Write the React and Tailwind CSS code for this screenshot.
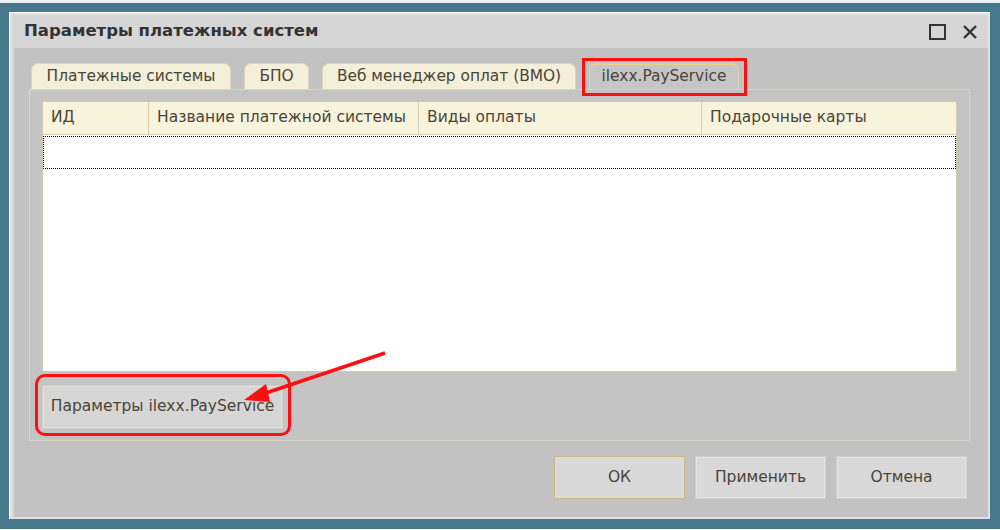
import React from "react";

const font = { fontFamily: '"DejaVu Sans", Verdana, sans-serif' };

const Tab = ({ label, w, active, children }) => (
  <div
    className={
      "relative h-[26px] flex items-center justify-center rounded-t-[7px] border border-b-0 text-[15.4px] text-[#4a4438] " +
      (active
        ? "bg-[#c6c6c6] border-[#d6d2c0] border-t-2 border-t-[#f0cf8c]"
        : "bg-[#f4efd8] border-[#ddd6bc]")
    }
    style={{ width: w }}
  >
    {label}
    {children}
  </div>
);

const HeadCell = ({ label, w, last }) => (
  <div
    className={
      "h-full flex items-center px-[8px] text-[15.5px] text-[#4a4438] " +
      (last ? "flex-1" : "border-r border-[#d6cca8]")
    }
    style={w ? { width: w } : undefined}
  >
    {label}
  </div>
);

const DlgButton = ({ label, primary }) => (
  <button
    className={
      "w-[131px] h-[43px] bg-[#d9d9d9] text-[15.5px] text-[#4a4438] border " +
      (primary
        ? "border-[#c9b98a] shadow-[inset_0_0_0_1px_#e6dcc0]"
        : "border-[#cfcfcf] shadow-[inset_0_0_0_1px_#e4e4e4]")
    }
  >
    {label}
  </button>
);

export default function App() {
  return (
    <div className="w-[1000px] h-[530px] bg-[#eef0f1] pt-[3px] pb-[1px]" style={font}>
      <div className="h-full bg-[#47788c] pl-[9px] pt-[9px] pr-[10px] pb-[10px]">
        <div className="h-full border-l border-t border-white bg-[#e2e2e2] p-[2px] flex flex-col">
          {/* Title bar */}
          <div className="h-[33px] bg-[#d6d6d6] flex items-center pl-[12px] pr-[10px]">
            <span className="text-[16.5px] font-bold text-[#333333]">
              Параметры платежных систем
            </span>
            <div className="ml-auto flex items-center gap-[16px]">
              <div className="w-[17px] h-[16px] border-2 border-[#333333]" />
              <svg width="16" height="16" viewBox="0 0 16 16">
                <path d="M2 2 L14 14 M14 2 L2 14" stroke="#333333" strokeWidth="2.4" />
              </svg>
            </div>
          </div>

          {/* Body */}
          <div className="flex-1 bg-[#c2c2c2] border-l-2 border-[#d8d8d8] pl-[15px] pr-[13px] pt-[15px] flex flex-col">
            {/* Tabs */}
            <div className="flex items-end gap-[13px] pl-[2px] relative z-10">
              <Tab label="Платежные системы" w={200} />
              <Tab label="БПО" w={65} />
              <Tab label="Веб менеджер оплат (ВМО)" w={254} />
              <Tab label="ilexx.PayService" w={150} active>
                <div className="absolute left-[-8px] right-[-9px] top-[-7px] bottom-[-7px] border-[3px] border-[#ff1010]" />
              </Tab>
            </div>

            {/* Panel */}
            <div className="h-[352px] w-[941px] border border-[#d9d6c6] bg-[#c4c4c4] px-[12px] pt-[11px] relative">
              <div className="h-[271px] bg-white border border-[#cfcab4] flex flex-col">
                <div className="h-[33px] bg-[#f8f4dc] border-b border-[#d8d0ae] flex">
                  <HeadCell label="ИД" w={106} />
                  <HeadCell label="Название платежной системы" w={270} />
                  <HeadCell label="Виды оплаты" w={283} />
                  <HeadCell label="Подарочные карты" last />
                </div>
                <div className="h-[33px] mt-[1px] border border-dotted border-black" />
              </div>

              <div className="mt-[13px] relative w-fit">
                <button className="w-[241px] h-[44px] bg-[#d6d6d6] border border-[#cfcfc4] shadow-[inset_0_0_0_1px_#e2e2e2] text-[15.5px] text-[#4a4438]">
                  Параметры ilexx.PayService
                </button>
                <div className="absolute left-[-7px] top-[-11px] w-[256px] h-[62px] rounded-[10px] border-[3px] border-[#ff1010]" />
              </div>

              <svg
                className="absolute left-[200px] top-[260px]"
                width="160"
                height="60"
                viewBox="0 0 160 60"
              >
                <line x1="155" y1="3" x2="30" y2="45" stroke="#ff1010" strokeWidth="3.5" />
                <polygon points="14,50 36,34 40,52" fill="#ff1010" />
              </svg>
            </div>

            {/* Dialog buttons */}
            <div className="flex justify-end gap-[10px] mt-[15px] pr-[8px]">
              <DlgButton label="ОК" primary />
              <DlgButton label="Применить" />
              <DlgButton label="Отмена" />
            </div>
          </div>
        </div>
      </div>
    </div>
  );
}
